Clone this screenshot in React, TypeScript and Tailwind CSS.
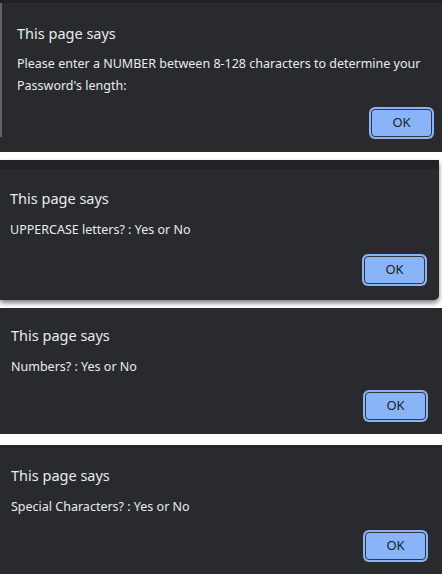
const font = { fontFamily: '"Noto Sans", "Open Sans", sans-serif' }

function OkButton({ className }: { className: string }) {
  return (
    <div className={`flex justify-end ${className}`}>
      <button className="flex h-[28px] w-[61px] items-center justify-center rounded-[4px] border border-[#35363a] bg-[#8ab4f8] text-[13px] text-[#202124] ring-2 ring-[#8ab4f8]">
        OK
      </button>
    </div>
  )
}

export default function App() {
  return (
    <div className="flex h-[574px] w-[442px] flex-col overflow-hidden bg-white text-[#e8eaed]" style={font}>
      {/* first alert */}
      <div className="h-[152px] shrink-0 bg-[#292a2d]">
        <div className="h-[3px] bg-[#202124]" />
        <div className="border-l-2 border-[#5f6368] pl-[15px] pr-[10px]">
          <div className="pt-[20px] text-[14.5px] leading-[20px]">This page says</div>
          <p className="mt-[10px] text-[12.5px] leading-[22px]">
            Please enter a NUMBER between 8-128 characters to determine your Password's length:
          </p>
          <OkButton className="mt-[12px]" />
        </div>
      </div>

      {/* second alert */}
      <div className="mt-[8px] h-[140px] shrink-0 overflow-hidden rounded-br-[5px] bg-[#292a2d] shadow-[0_3px_5px_rgba(0,0,0,0.5)] mr-[3px]">
        <div className="h-[9px] bg-[#222326]" />
        <div className="pl-[10px] pr-[14px]">
          <div className="pt-[19px] text-[14.5px] leading-[20px]">This page says</div>
          <p className="mt-[11px] text-[12.5px] leading-[22px]">UPPERCASE letters? : Yes or No</p>
          <OkButton className="mt-[15px]" />
        </div>
      </div>

      {/* third alert */}
      <div className="mt-[8px] h-[126px] shrink-0 bg-[#292a2d]">
        <div className="pl-[11px] pr-[16px]">
          <div className="pt-[17px] text-[14.5px] leading-[20px]">This page says</div>
          <p className="mt-[11px] text-[12.5px] leading-[22px]">Numbers? : Yes or No</p>
          <OkButton className="mt-[14px]" />
        </div>
      </div>

      {/* fourth alert */}
      <div className="mt-[11px] flex-1 bg-[#292a2d]">
        <div className="h-[3px] bg-[#26272a]" />
        <div className="pl-[11px] pr-[16px]">
          <div className="pt-[17px] text-[14.5px] leading-[20px]">This page says</div>
          <p className="mt-[11px] text-[12.5px] leading-[22px]">Special Characters? : Yes or No</p>
          <OkButton className="mt-[14px]" />
        </div>
      </div>
    </div>
  )
}
